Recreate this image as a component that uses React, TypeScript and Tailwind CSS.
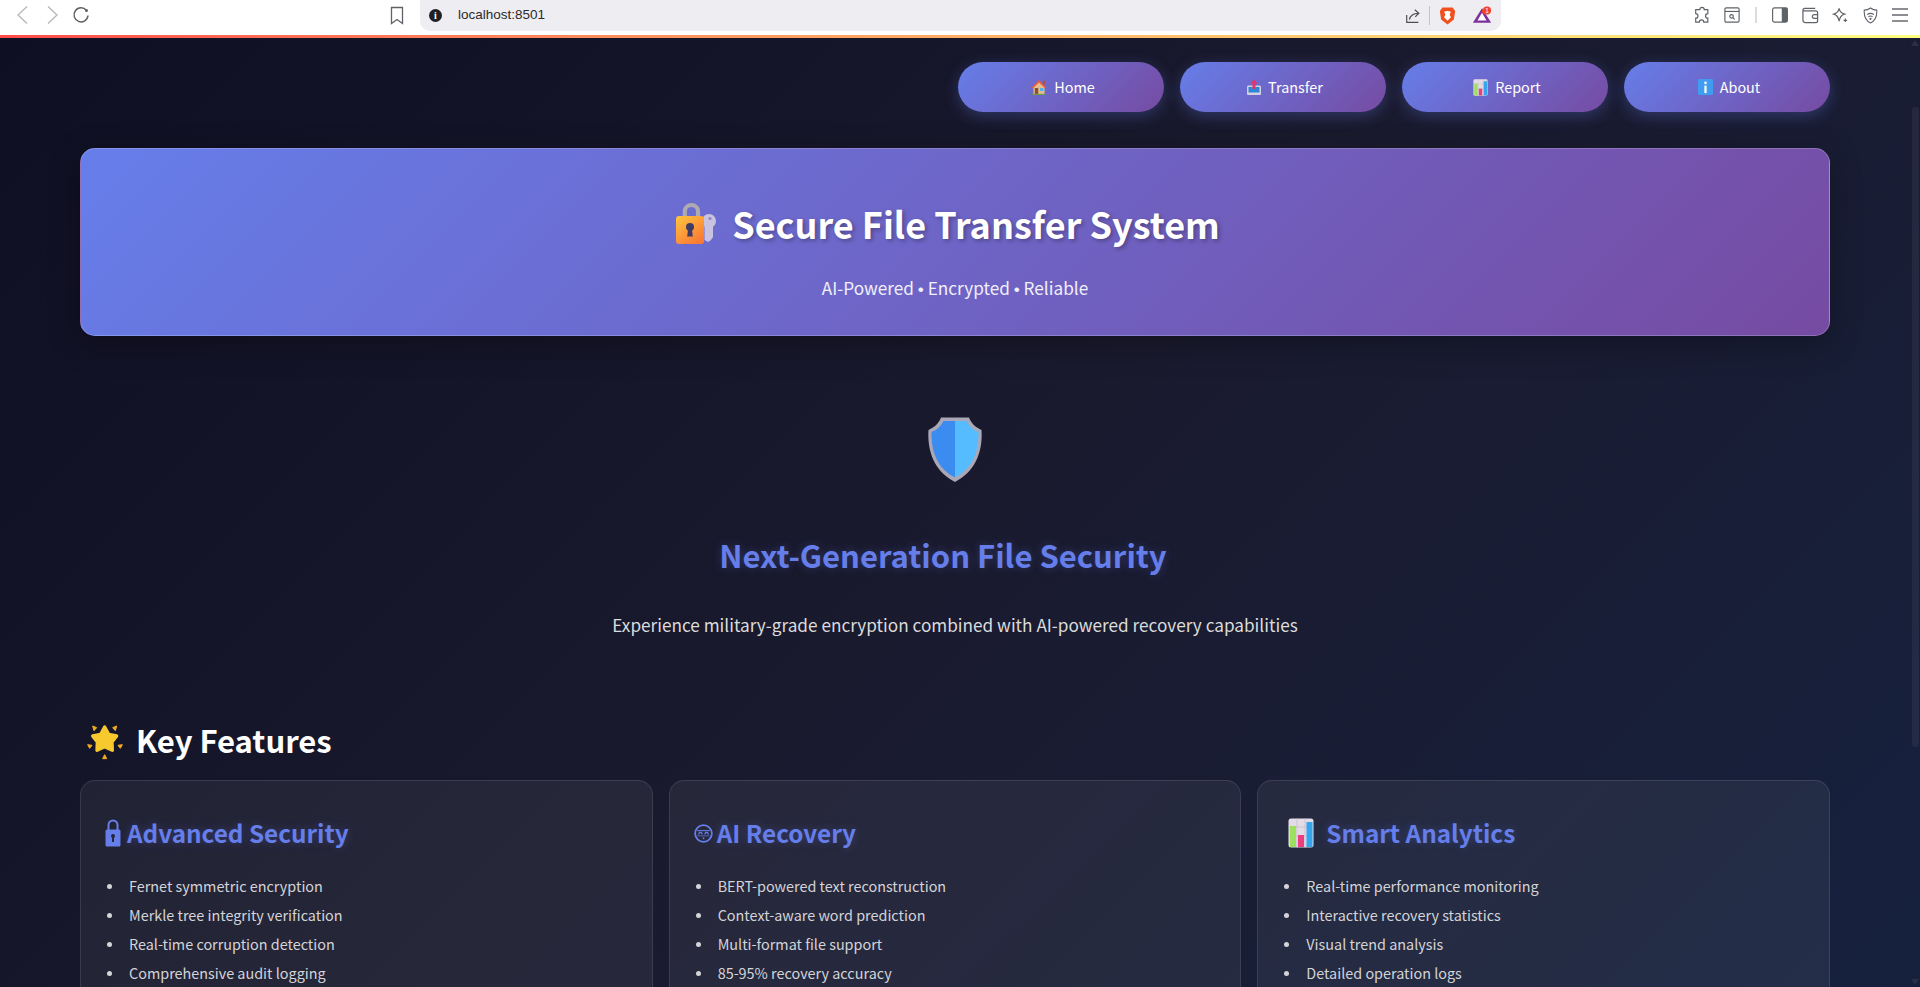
import type { ReactNode } from 'react';

function HomeEmoji() {
  return (
    <svg viewBox="0 0 16 16" className="w-[16px] h-[16px]">
      <path d="M2.500 7.500 8 2.500l5.500 5V15h-11z" fill="#e6bd8e" />
      <path d="M.5 8.500 8 1l7.500 7.500-1.200 1L8 3.500 1.700 9.500z" fill="#ea5a3c" />
      <rect x="12" y="1.500" width="1.800" height="4" fill="#c9452f" />
      <rect x="3.800" y="9" width="3.400" height="6" fill="#8a4f32" />
      <rect x="9" y="9" width="3.400" height="3" fill="#4fb2e8" />
      <rect x="1" y="14.800" width="14" height="1.200" fill="#6d9c4b" />
    </svg>
  );
}

function TransferEmoji() {
  return (
    <svg viewBox="0 0 14 16" className="w-[14px] h-[16px]">
      <path d="M1 6.500h12l1 1v7.500a1 1 0 0 1-1 1H1a1 1 0 0 1-1-1V7.500z" fill="#d6d1e0" />
      <rect x="1.500" y="8" width="11" height="5.500" fill="#2f86d6" />
      <path d="M7 .5l3.500 4H8.500v5.500h-3V4.500H3.500z" fill="#e6336a" />
    </svg>
  );
}

function ChartEmoji({ size }: { size: string }) {
  return (
    <svg viewBox="0 0 26 30" className={size}>
      <rect x="0.500" y="0.500" width="25" height="29" rx="2.500" fill="#e3dbe6" />
      <path d="M0.500 9h25M0.500 18h25M9 0.500v29M17 0.500v29" stroke="#c7bfcc" strokeWidth="0.800" />
      <rect x="2" y="8" width="6" height="21" fill="#9be15d" />
      <rect x="10" y="17" width="6" height="12" fill="#ec3d7c" />
      <rect x="18.500" y="4" width="6" height="25" fill="#35a6ee" />
    </svg>
  );
}

function InfoEmoji() {
  return (
    <svg viewBox="0 0 16 17" className="w-[15px] h-[16px]">
      <rect width="16" height="17" rx="1.500" fill="#3f9cf0" />
      <rect x="6.800" y="7" width="2.400" height="8" fill="#fff" />
      <rect x="6.800" y="2.800" width="2.400" height="2.600" fill="#fff" />
    </svg>
  );
}

function LockKeyEmoji() {
  return (
    <svg viewBox="0 0 40 42" className="w-[40px] h-[42px]">
      <defs>
        <linearGradient id="lockBody" x1="0" y1="0" x2="0.700" y2="1">
          <stop offset="0" stopColor="#ffc43f" />
          <stop offset="1" stopColor="#f97b35" />
        </linearGradient>
      </defs>
      <path d="M8 16V9a6 6 0 0 1 12 0v7" transform="scale(1.100 1)" fill="none" stroke="#aeabb0" strokeWidth="3.800" />
      <circle cx="33" cy="19" r="7" fill="#c9c2e0" />
      <path d="M28.500 22h8.500v13l-2 3-3 2-3.500-2z" fill="#c9c2e0" />
      <circle cx="34" cy="16.500" r="1.600" fill="#8f86bd" />
      <rect x="0" y="14" width="28" height="28" rx="3" fill="url(#lockBody)" />
      <circle cx="14" cy="25" r="4" fill="#3f3a63" />
      <path d="M12.200 26h3.600l1 8.500h-5.600z" fill="#3f3a63" />
    </svg>
  );
}

function ShieldEmoji() {
  return (
    <svg viewBox="0 0 54 65" className="w-[54px] h-[65px]">
      <path d="M13 .5H41C43 6 47 10 53.500 13 55 35 47 55 27 65 7 55-1 35 .5 13 7 10 11 6 13 .5z" fill="#aaa7b6" />
      <path d="M27 4H15.500C13 9 9 13 3.500 15 3 35 10 52 27 60.500z" fill="#3a8cf0" />
      <path d="M27 4H38.500C41 9 45 13 50.500 15 51 35 44 52 27 60.500z" fill="#55bdff" />
    </svg>
  );
}

function StarEmoji() {
  return (
    <svg viewBox="0 0 108 108" className="w-[36px] h-[36px] mt-[3px]">
      <path d="M53 9 65 31 89 36 75 54 76 79 53 68 30 79 31 54 17 36 41 31z" fill="#f8c92e" stroke="#f8c92e" strokeWidth="10" strokeLinejoin="round" />
      <g fill="#f4ae1e" stroke="#f4ae1e" strokeWidth="3" strokeLinejoin="round">
        <path d="M17 6l12 5-8 9z" />
        <path d="M89 6l-12 5 8 9z" />
        <path d="M2 62l13 2-7 9z" />
        <path d="M106 62l-13 2 7 9z" />
        <path d="M53 92l6 12H47z" />
      </g>
    </svg>
  );
}

function SolidLock() {
  return (
    <svg viewBox="0 0 16 28" className="w-[16px] h-[28px]">
      <path d="M3.500 11V6a4.500 4.500 0 0 1 9 0v5" fill="none" stroke="#667eea" strokeWidth="2" />
      <rect x="0.500" y="10.500" width="15" height="17" rx="1.500" fill="#667eea" />
      <circle cx="8" cy="17" r="2" fill="#262739" />
      <rect x="7" y="17" width="2" height="6" fill="#262739" />
    </svg>
  );
}

function RobotFace() {
  return (
    <svg viewBox="0 0 20 20" className="w-[19px] h-[19px]" fill="none" stroke="#667eea">
      <circle cx="10" cy="10" r="8.800" strokeWidth="1.900" />
      <path d="M3.500 7h13" strokeWidth="1.200" />
      <path d="M5 11c0-3 3.500-3 3.500 0M11.500 11c0-3 3.500-3 3.500 0" strokeWidth="1.300" />
      <path d="M3.500 12.500h13" strokeWidth="0.800" />
      <circle cx="10" cy="15" r="0.800" fill="#667eea" strokeWidth="0.500" />
    </svg>
  );
}

function Toolbar() {
  const iconStroke = '#5f6368';
  return (
    <div className="h-[35px] pb-[5px] bg-white flex items-center shrink-0 relative">
      <svg viewBox="0 0 80 24" className="w-[80px] h-[24px] ml-[14px]" fill="none" strokeWidth="1.300">
        <path d="M13 3.500 4 12l9 8.500" stroke="#b5b7ba" />
        <path d="M34 3.500 43 12l-9 8.500" stroke="#b5b7ba" />
        <path d="M72.500 7.500a7 7 0 1 0 1.500 5" stroke={iconStroke} strokeWidth="1.500" />
        <circle cx="72.500" cy="7.500" r="1.500" fill={iconStroke} stroke="none" />
      </svg>
      <svg viewBox="0 0 14 18" className="w-[14px] h-[19px] ml-[296px]" fill="none" stroke={iconStroke} strokeWidth="1.300">
        <path d="M1.500 1h11v16L7 13l-5.500 4z" />
      </svg>
      <div className="ml-[16px] w-[1081px] h-[31px] self-start rounded-b-[10px] bg-[#eeedf2] flex items-center pl-[9px]">
        <span className="w-[13px] h-[13px] rounded-full bg-[#202124] text-white text-[10px] leading-[13px] text-center font-bold font-['Liberation_Serif',serif]">i</span>
        <span className="ml-[16px] text-[13.500px] text-[#2b2b2b] font-['Liberation_Sans',sans-serif]">localhost:8501</span>
        <svg viewBox="0 0 20 20" className="w-[18px] h-[18px] ml-auto" fill="none" stroke="#4d4f53" strokeWidth="1.300">
          <path d="M3 9v8h13M6 14c1-5 4-7 10-7M12 3l4.500 4-4 4" />
        </svg>
        <span className="w-px h-[19px] bg-[#c5c5c9] ml-[7px]" />
        <svg viewBox="0 0 20 22" className="w-[17px] h-[20px] ml-[9px]">
          <path d="M4 1h12l3 4-1.500 10L10 21l-7.500-6L1 5z" fill="#f0501e" />
          <path d="M6 6c2-1 6-1 8 0l-1.500 3.500 1.500 3-4 4-4-4 1.500-3z" fill="#fff" />
        </svg>
        <svg viewBox="0 0 22 20" className="w-[20px] h-[19px] ml-[16px] mr-[9px]">
          <path d="M11 2 21 18H1z" fill="#7d2f9b" />
          <path d="M11 7l5 8.500H6z" fill="#fff" />
          <path d="M11 2 16 10l-5-3z" fill="#e0432b" />
          <circle cx="16.500" cy="4.500" r="4.500" fill="#f0442e" />
          <text x="16.500" y="7" fontSize="7" fill="#fff" textAnchor="middle" fontFamily="Liberation Sans">1</text>
        </svg>
      </div>
      <div className="ml-[192px] flex items-center">
        <svg viewBox="0 0 20 20" className="w-[18px] h-[18px]" fill="none" stroke={iconStroke} strokeWidth="1.300">
          <path d="M7.500 4a2.500 2.500 0 0 1 5 0h4v4.500a2.500 2.500 0 0 0 0 5V18h-4.500a2.500 2.500 0 0 0-5 0H3v-4.500a2.500 2.500 0 0 0 0-5V4z" />
        </svg>
        <svg viewBox="0 0 18 18" className="w-[16px] h-[16px] ml-[13px]" fill="none" stroke={iconStroke} strokeWidth="1.300">
          <rect x="1" y="1" width="16" height="16" rx="1.500" />
          <path d="M1 5h16" />
          <circle cx="8.500" cy="10.500" r="2" />
          <path d="M10 12l2 2" />
        </svg>
        <span className="w-[2px] h-[16px] bg-[#dcdcdf] ml-[15px]" />
        <svg viewBox="0 0 18 18" className="w-[16px] h-[16px] ml-[15px]">
          <rect x="0.700" y="1" width="16.600" height="16" rx="2" fill="none" stroke={iconStroke} strokeWidth="1.300" />
          <rect x="11" y="1" width="6.300" height="16" fill={iconStroke} />
        </svg>
        <svg viewBox="0 0 18 18" className="w-[17px] h-[17px] ml-[14px]" fill="none" stroke={iconStroke} strokeWidth="1.300">
          <path d="M3 1.500h11M1 4a2 2 0 0 1 2-2.500M1 4v10a2.500 2.500 0 0 0 2.500 2.500h11a2 2 0 0 0 2-2V6a2 2 0 0 0-2-2H1" />
          <path d="M17 8h-4a2 2 0 0 0 0 4h4" />
        </svg>
        <svg viewBox="0 0 18 18" className="w-[16px] h-[16px] ml-[13px]" fill="none" stroke={iconStroke} strokeWidth="1.300">
          <path d="M8 1.500c.8 4 2.200 5.500 6 6.500-3.800 1-5.200 3-6 8-.8-5-2.200-7-6-8 3.800-1 5.200-2.500 6-6.500z" />
          <path d="M15 13v4M13 15h4" />
        </svg>
        <svg viewBox="0 0 18 20" className="w-[15px] h-[17px] ml-[15px]" fill="none" stroke={iconStroke} strokeWidth="1.300">
          <path d="M9 1c2 1.500 4.500 2.500 7.500 2.500.5 7-1 12.500-7.500 15.500C2.500 16 1 10.500 1.500 3.500 4.500 3.500 7 2.500 9 1z" />
          <path d="M5 9c2.500-2 5.500-2 8 0M6.500 11.500c1.500-1 3.500-1 5 0" />
          <circle cx="9" cy="14" r="0.700" />
        </svg>
        <div className="ml-[14px] w-[16px] flex flex-col gap-[4px]">
          <span className="h-[2px] bg-[#8c8e92]" />
          <span className="h-[2px] bg-[#8c8e92]" />
          <span className="h-[2px] bg-[#8c8e92]" />
        </div>
      </div>
    </div>
  );
}

function NavButton({ icon, label }: { icon: ReactNode; label: string }) {
  return (
    <button className="w-[206px] h-[50px] pl-[4px] rounded-[25px] bg-[linear-gradient(135deg,#667eea_0%,#764ba2_100%)] text-white text-[14.400px] flex items-center justify-center gap-[7px] shadow-[0_4px_15px_rgba(102,126,234,0.3)]">
      {icon}
      {label}
    </button>
  );
}

function FeatureCard({ icon, title, items, gap }: { icon: ReactNode; title: string; items: string[]; gap: string }) {
  return (
    <div className="h-[260px] rounded-[15px] border border-white/10 bg-white/[0.06] pl-[24px] pr-[24px] pt-[32px]">
      <h3 className={`flex items-center h-[40px] text-[24.300px] font-semibold text-[#667eea] ${gap} [text-shadow:0_0_10px_rgba(102,126,234,0.3)]`}>
        {icon}
        {title}
      </h3>
      <ul className="mt-[21px] ml-[2px] text-[14.400px] leading-[24px] text-[#d4d4d8]">
        {items.map((item) => (
          <li key={item} className="mb-[5px] flex items-center">
            <span className="w-[5px] h-[5px] rounded-full bg-[#d4d4d8]" />
            <span className="ml-[17px]">{item}</span>
          </li>
        ))}
      </ul>
    </div>
  );
}

export default function App() {
  return (
    <div className="h-[987px] overflow-hidden flex flex-col font-['Noto_Sans_CJK_SC','Noto_Sans',sans-serif]">
      <Toolbar />
      <div className="h-[3px] shrink-0 bg-linear-to-r from-[#ff4b4b] to-[#fffd80]" />
      <main className="flex-1 relative overflow-hidden bg-[linear-gradient(135deg,#0f0f23_0%,#1a1a2e_50%,#16213e_100%)] px-[80px] pt-[24px]">
        <div className="w-[1750px]">
          <nav className="flex justify-end gap-[16px]">
            <NavButton icon={<HomeEmoji />} label="Home" />
            <NavButton icon={<TransferEmoji />} label="Transfer" />
            <NavButton icon={<ChartEmoji size="w-[15px] h-[17px]" />} label="Report" />
            <NavButton icon={<InfoEmoji />} label="About" />
          </nav>

          <header className="mt-[36px] h-[188px] rounded-[15px] border border-white/20 bg-[linear-gradient(135deg,#667eea_0%,#764ba2_100%)] shadow-[0_8px_32px_rgba(0,0,0,0.3)] flex flex-col items-center text-white">
            <h1 className="mt-[49px] pr-[14px] flex items-center gap-[16px] text-[36px] leading-[50px] font-bold [text-shadow:2px_2px_4px_rgba(0,0,0,0.3)]">
              <LockKeyEmoji />
              Secure File Transfer System
            </h1>
            <p className="mt-[27px] text-[17.200px] leading-[26px] text-white/90">
              AI-Powered <span className="font-['Liberation_Sans',sans-serif]">•</span> Encrypted <span className="font-['Liberation_Sans',sans-serif]">•</span> Reliable
            </p>
          </header>

          <section className="flex flex-col items-center">
            <div className="mt-[81px]">
              <ShieldEmoji />
            </div>
            <h2 className="mt-[49px] pr-[24px] text-[31px] leading-[48px] font-semibold text-[#667eea] [text-shadow:0_0_10px_rgba(102,126,234,0.3)]">Next-Generation File Security</h2>
            <p className="mt-[32px] text-[17.200px] leading-[28px] text-[#dcdcdc]">Experience military-grade encryption combined with AI-powered recovery capabilities</p>
          </section>

          <h2 className="mt-[77px] flex items-center gap-[13px] pl-[7px] text-[31px] leading-[48px] font-semibold text-white">
            <StarEmoji />
            Key Features
          </h2>

          <div className="mt-[16px] grid grid-cols-3 gap-[16px]">
            <FeatureCard
              icon={<SolidLock />}
              title="Advanced Security"
              gap="gap-[6px]"
              items={['Fernet symmetric encryption', 'Merkle tree integrity verification', 'Real-time corruption detection', 'Comprehensive audit logging']}
            />
            <FeatureCard
              icon={<RobotFace />}
              title="AI Recovery"
              gap="gap-[4px]"
              items={['BERT-powered text reconstruction', 'Context-aware word prediction', 'Multi-format file support', '85-95% recovery accuracy']}
            />
            <FeatureCard
              icon={<span className="ml-[6px]"><ChartEmoji size="w-[26px] h-[30px]" /></span>}
              title="Smart Analytics"
              gap="gap-[12px]"
              items={['Real-time performance monitoring', 'Interactive recovery statistics', 'Visual trend analysis', 'Detailed operation logs']}
            />
          </div>
        </div>

        <svg viewBox="0 0 8 6" className="absolute right-[1px] top-[2px] w-[8px] h-[6px]">
          <path d="M4 0l4 6H0z" fill="#2b2e44" />
        </svg>
        <div className="absolute right-[1px] top-[69px] w-[7px] h-[640px] rounded-full bg-white/5" />
        <svg viewBox="0 0 8 6" className="absolute right-[1px] bottom-[2px] w-[8px] h-[6px]">
          <path d="M4 6l4-6H0z" fill="#2b2e44" />
        </svg>
      </main>
    </div>
  );
}
